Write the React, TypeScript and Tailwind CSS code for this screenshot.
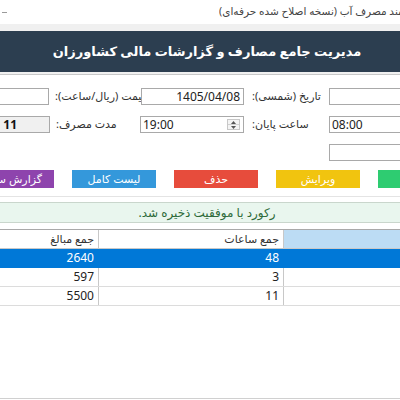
import React from "react";

const fontStack = "font-['Noto_Sans','DejaVu_Sans',sans-serif]";

function Spinner() {
  return (
    <div className="absolute right-[3px] top-[2px] bottom-[2px] w-[13px] flex flex-col border border-[#c8c8c8] bg-[#f4f4f4]">
      <div className="flex-1 flex items-center justify-center border-b border-[#d0d0d0]">
        <svg width="5" height="3" viewBox="0 0 5 3">
          <path d="M0 3 L2.5 0 L5 3 Z" fill="#555" />
        </svg>
      </div>
      <div className="flex-1 flex items-center justify-center">
        <svg width="5" height="3" viewBox="0 0 5 3">
          <path d="M0 0 L2.5 3 L5 0 Z" fill="#555" />
        </svg>
      </div>
    </div>
  );
}

const rows = [
  { amount: "2640", hours: "48", selected: true },
  { amount: "597", hours: "3", selected: false },
  { amount: "5500", hours: "11", selected: false },
];

export default function App() {
  return (
    <div className={`w-[400px] h-[400px] overflow-hidden bg-white flex flex-col ${fontStack}`}>
      {/* window caption */}
      <div className="h-[24px] flex items-center justify-between bg-white overflow-hidden">
        <div className="ml-[2px] w-[5px] h-px bg-[#9a9a9a]" />
        <div className="flex justify-end overflow-hidden">
          <span dir="rtl" className="whitespace-nowrap text-[10.5px] text-[#444] mr-[-56px]">
            سامانه هوشمند مصرف آب (نسخه اصلاح شده حرفه‌ای)
          </span>
        </div>
      </div>
      <div className="h-[7px] bg-[#f0f0f0]" />

      {/* header band */}
      <div className="h-[41px] bg-[#2c3e50] flex items-center justify-center pl-[14px]">
        <span dir="rtl" className="text-white font-bold text-[13px] whitespace-nowrap">
          مدیریت جامع مصارف و گزارشات مالی کشاورزان
        </span>
      </div>
      <div className="h-[2px] bg-[#f0f0f0]" />
      <div className="h-px bg-[#c8c8c8]" />

      {/* form */}
      <div className="pt-[13px] flex flex-col gap-[11px] text-[12px] text-[#222]">
        {/* row 1 */}
        <div className="flex h-[17px]">
          <div className="w-[49px] border border-l-0 border-[#a9a9a9] bg-white" />
          <div className="w-[86px] ml-[6px] overflow-hidden flex items-center">
            <span dir="rtl" className="whitespace-nowrap text-[11px] text-[#333]">قیمت (ریال/ساعت):</span>
          </div>
          <div className="w-[103px] border border-[#a9a9a9] bg-white flex items-center justify-end pr-[3px]">
            1405/04/08
          </div>
          <div className="w-[77px] ml-[8px] flex items-center">
            <span dir="rtl" className="whitespace-nowrap text-[11px] text-[#333]">تاریخ (شمسی):</span>
          </div>
          <div className="flex-1 border border-r-0 border-[#a9a9a9] bg-white" />
        </div>

        {/* row 2 */}
        <div className="flex h-[17px]">
          <div className="w-[50px] border border-l-0 border-[#a9a9a9] bg-[#f0f0f0] overflow-hidden flex items-center justify-end pr-[32px]">
            <span dir="rtl" className="whitespace-nowrap font-bold text-[12px] text-[#111]">11 ساعت</span>
          </div>
          <div className="w-[84px] ml-[6px] flex items-center">
            <span dir="rtl" className="whitespace-nowrap text-[11px] text-[#333]">مدت مصرف:</span>
          </div>
          <div className="relative w-[104px] border border-[#a9a9a9] bg-white flex items-center pl-[2px]">
            19:00
            <Spinner />
          </div>
          <div className="w-[77px] ml-[8px] flex items-center">
            <span dir="rtl" className="whitespace-nowrap text-[11px] text-[#333]">ساعت پایان:</span>
          </div>
          <div className="flex-1 border border-r-0 border-[#a9a9a9] bg-white flex items-center pl-[2px]">
            08:00
          </div>
        </div>

        {/* row 3 */}
        <div className="flex h-[17px] justify-end">
          <div className="w-[71px] border border-r-0 border-[#a9a9a9] bg-white" />
        </div>
      </div>

      {/* action buttons */}
      <div className="mt-[9px] h-[18px] flex gap-[18px] text-[11px] text-white">
        <div className="w-[54px] bg-[#8e44ad] overflow-hidden flex items-center justify-end">
          <span dir="rtl" className="whitespace-nowrap mr-[12px]">گزارش سالانه</span>
        </div>
        <div dir="rtl" className="w-[84px] bg-[#3498db] flex items-center justify-center">لیست کامل</div>
        <div dir="rtl" className="w-[84px] bg-[#e74c3c] flex items-center justify-center">حذف</div>
        <div dir="rtl" className="w-[84px] bg-[#f1c40f] flex items-center justify-center">ویرایش</div>
        <div className="flex-1 bg-[#2ecc71]" />
      </div>

      <div className="mt-[8px] h-px bg-[#e4e4e4]" />

      {/* status message */}
      <div className="mt-[5px] h-[21px] border-y border-[#c9d6cc] bg-[#e9f6ee] flex items-center justify-center pl-[14px]">
        <span dir="rtl" className="text-[12px] text-[#2e6b3a] whitespace-nowrap">رکورد با موفقیت ذخیره شد.</span>
      </div>

      {/* totals grid */}
      <div className="mt-[6px] border-t border-[#a9a9a9] text-[12px]">
        <div className="flex h-[19px] border-b border-[#c8c8c8]">
          <div className="w-[99px] border-r border-[#c8c8c8] bg-white flex items-center justify-end pr-[4px]">
            <span dir="rtl" className="text-[11px] text-[#333]">جمع مبالغ</span>
          </div>
          <div className="w-[185px] border-r border-[#c8c8c8] bg-white flex items-center justify-end pr-[4px]">
            <span dir="rtl" className="text-[11px] text-[#333]">جمع ساعات</span>
          </div>
          <div className="flex-1 bg-[#bcdcf4]" />
        </div>
        {rows.map((r) => (
          <div
            key={r.amount}
            className={`flex h-[19px] border-b ${r.selected ? "bg-[#0078d7] text-white border-[#0078d7]" : "bg-white text-[#222] border-[#dcdcdc]"}`}
          >
            <div className={`w-[99px] border-r flex items-center justify-end pr-[4px] ${r.selected ? "border-[#0078d7]" : "border-[#c8c8c8]"}`}>
              {r.amount}
            </div>
            <div className={`w-[185px] border-r flex items-center justify-end pr-[4px] ${r.selected ? "border-[#0078d7]" : "border-[#c8c8c8]"}`}>
              {r.hours}
            </div>
            <div className="flex-1" />
          </div>
        ))}
      </div>

      <div className="flex-1" />
      <div className="h-px bg-[#d0d0d0] mb-[1px]" />
    </div>
  );
}
